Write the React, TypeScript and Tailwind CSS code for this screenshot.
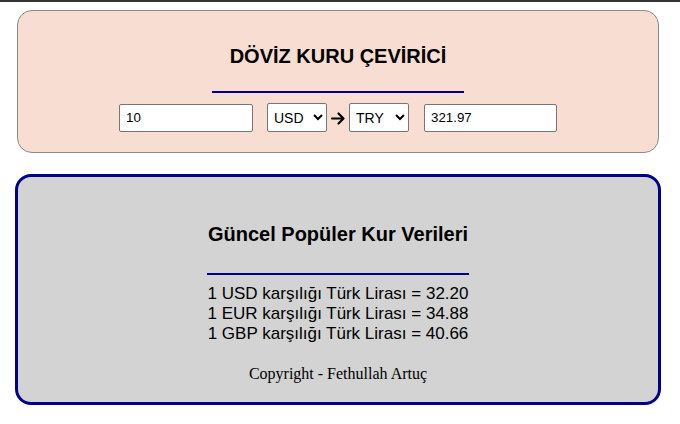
import { useState } from "react";

const rates = [
  { code: "USD", value: "32.20" },
  { code: "EUR", value: "34.88" },
  { code: "GBP", value: "40.66" },
];

export default function App() {
  const [amount, setAmount] = useState("10");
  const [from, setFrom] = useState("USD");
  const [to, setTo] = useState("TRY");

  return (
    <div className="min-h-[424px] bg-white font-['Liberation_Sans',Arial,sans-serif] text-black">
      <div className="h-[2px] bg-[#333333]" />

      {/* Converter */}
      <div className="ml-[17px] mt-[8px] w-[642px] rounded-[15px] border border-[#8a8a8a] bg-[#f8ddd2] pt-[34px] pb-[20px]">
        <h2 className="text-center text-[20px] leading-[23px] font-bold">
          DÖVİZ KURU ÇEVİRİCİ
        </h2>
        <div className="mx-auto mt-[23px] h-[2px] w-[252px] bg-[#00008b]" />

        <div className="mt-[10px] flex items-center justify-center text-[13.33px]">
          <input
            value={amount}
            onChange={(e) => setAmount(e.target.value)}
            className="h-[28px] w-[134px] rounded-[2px] border border-[#767676] bg-white pl-[6px] outline-none"
          />
          <select
            value={from}
            onChange={(e) => setFrom(e.target.value)}
            className="ml-[14px] h-[29px] w-[60px] rounded-[2px] border border-[#767676] bg-white pl-[2px] text-[14px]"
          >
            <option>USD</option>
            <option>EUR</option>
            <option>GBP</option>
          </select>
          <svg
            width="16"
            height="16"
            viewBox="0 0 16 16"
            className="mx-[3px]"
            fill="none"
            stroke="black"
            strokeWidth="2.2"
            strokeLinecap="round"
            strokeLinejoin="round"
          >
            <path d="M2 8.5h11.5M8.5 3.5l5 5-5 5" />
          </svg>
          <select
            value={to}
            onChange={(e) => setTo(e.target.value)}
            className="h-[29px] w-[60px] rounded-[2px] border border-[#767676] bg-white pl-[2px] text-[14px]"
          >
            <option>TRY</option>
            <option>USD</option>
            <option>EUR</option>
          </select>
          <input
            readOnly
            value="321.97"
            className="ml-[15px] h-[28px] w-[133px] rounded-[2px] border border-[#767676] bg-white pl-[6px] outline-none"
          />
        </div>
      </div>

      {/* Popular rates */}
      <div className="ml-[15px] mt-[21px] w-[646px] rounded-[16px] border-[3px] border-[#00008b] bg-[#d3d3d3] pt-[46px] pb-[19px]">
        <h2 className="text-center text-[20px] leading-[23px] font-bold">
          Güncel Popüler Kur Verileri
        </h2>
        <div className="mx-auto mt-[27px] h-[2px] w-[262px] bg-[#00008b]" />

        <div className="mt-[9px] text-center text-[17px] leading-[20px]">
          {rates.map((rate) => (
            <div key={rate.code}>
              1 {rate.code} karşılığı Türk Lirası = {rate.value}
            </div>
          ))}
        </div>

        <p className="mt-[21px] text-center font-['Liberation_Serif','Times_New_Roman',serif] text-[16px] leading-[18px]">
          Copyright - Fethullah Artuç
        </p>
      </div>
    </div>
  );
}
